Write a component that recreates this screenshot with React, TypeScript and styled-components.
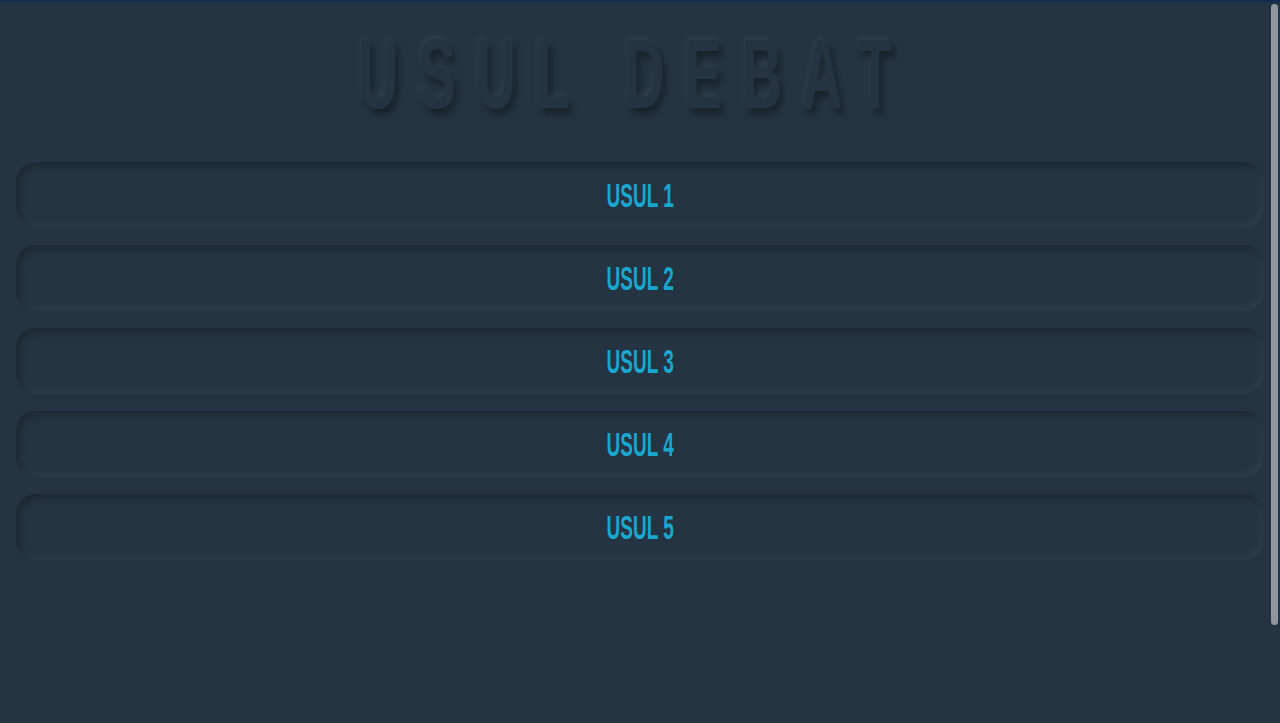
import React from "react";
import styled, { createGlobalStyle } from "styled-components";

const GlobalStyle = createGlobalStyle`
  html, body {
    margin: 0;
    padding: 0;
    height: 100%;
    overflow: hidden;
    background: #243442;
  }
  #root {
    height: 100%;
  }
  body {
    font-family: "Liberation Sans Narrow", "Liberation Sans", "DejaVu Sans Condensed", sans-serif;
  }
`;

const Viewport = styled.div`
  height: 100vh;
  box-sizing: border-box;
  border-top: 2px solid #132b52;
  display: flex;
  background: #243442;
`;

const Page = styled.main`
  flex: 1;
  min-width: 0;
  overflow: hidden;
  box-sizing: border-box;
  padding: 24px 6px 40px 16px;
  display: flex;
  flex-direction: column;
`;

const ScrollRail = styled.div`
  width: 10px;
  flex: none;
  display: flex;
  flex-direction: column;
  padding: 2px 2px 0 1px;
  box-sizing: border-box;
  background: #243442;
`;

const ScrollThumb = styled.div`
  height: 621px;
  border-radius: 4px;
  background: #8e979f;
`;

const Header = styled.header`
  display: flex;
  justify-content: center;
  margin: 0 0 40px -10px;
`;

const Title = styled.h1`
  margin: 0;
  font-family: "Liberation Sans Narrow", "Liberation Sans", sans-serif;
  font-weight: 700;
  font-size: 99px;
  line-height: 96px;
  letter-spacing: 36px;
  color: #243442;
  display: inline-block;
  transform: scaleX(0.56);
  white-space: nowrap;
  text-shadow: 6px 6px 9px rgba(0, 0, 0, 0.34),
    -4px -4px 8px rgba(255, 255, 255, 0.05);
`;

const List = styled.nav`
  display: flex;
  flex-direction: column;
  gap: 17px;
`;

const RuleButton = styled.button`
  height: 66px;
  width: 100%;
  border: none;
  border-radius: 20px;
  background: #243442;
  box-shadow: inset 4px 4px 7px rgba(0, 0, 0, 0.22),
    inset -4px -4px 7px rgba(255, 255, 255, 0.045);
  display: flex;
  align-items: center;
  justify-content: center;
  cursor: pointer;
  padding: 0;
`;

const Label = styled.span`
  display: inline-block;
  font-family: "Liberation Sans Narrow", "Liberation Sans", sans-serif;
  font-weight: 700;
  font-size: 34px;
  line-height: 1;
  color: #19a6cf;
  transform: scaleX(0.56);
  white-space: nowrap;
`;

const rules = ["USUL 1", "USUL 2", "USUL 3", "USUL 4", "USUL 5"];

export default function App() {
  return (
    <>
      <GlobalStyle />
      <Viewport>
        <Page>
          <Header>
            <Title>USUL DEBAT</Title>
          </Header>
          <List>
            {rules.map((r) => (
              <RuleButton key={r}>
                <Label>{r}</Label>
              </RuleButton>
            ))}
          </List>
        </Page>
        <ScrollRail>
          <ScrollThumb />
        </ScrollRail>
      </Viewport>
    </>
  );
}
